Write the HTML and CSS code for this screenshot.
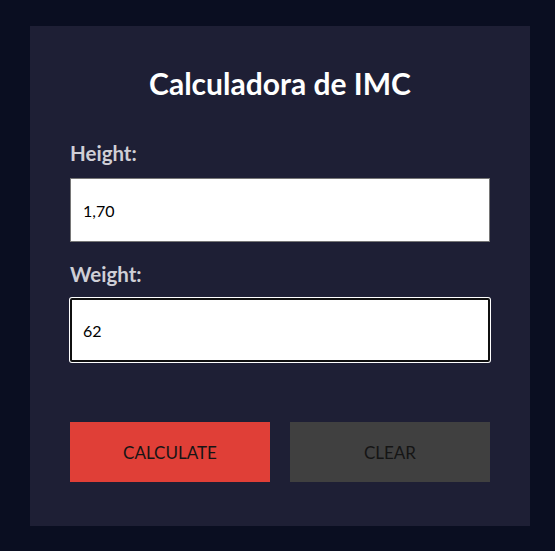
FILE: index.html
```html
<!DOCTYPE html>
<html lang="pt">
<head>
<meta charset="utf-8">
<title>Calculadora de IMC</title>
<link rel="stylesheet" href="styles.css">
</head>
<body>
<main class="card">
  <h1 class="title">Calculadora de IMC</h1>
  <form class="form">
    <label class="label" for="height">Height:</label>
    <input class="field" id="height" type="text" value="1,70">
    <label class="label label-second" for="weight">Weight:</label>
    <input class="field field-focus" id="weight" type="text" value="62">
    <div class="actions">
      <button type="button" class="btn btn-calc">CALCULATE</button>
      <button type="button" class="btn btn-clear">CLEAR</button>
    </div>
  </form>
</main>
</body>
</html>
```
FILE: styles.css
```css
* { box-sizing: border-box; }
html, body { margin: 0; padding: 0; }
body {
  background: #0a0e21;
  font-family: Lato, "Noto Sans", sans-serif;
  padding-top: 26px;
  height: 551px;
}
.card {
  width: 500px;
  height: 500px;
  margin: 0 0 0 30px;
  background: #1e1f35;
  padding: 40px 40px 0;
}
.title {
  margin: 0;
  font-size: 30px;
  font-weight: 700;
  color: #ffffff;
  text-align: center;
  line-height: 34px;
}
.form {
  display: flex;
  flex-direction: column;
  margin-top: 41px;
}
.label {
  font-size: 20.5px;
  font-weight: 700;
  color: #cfcfd6;
  line-height: 24px;
}
.label-second { margin-top: 20px; }
.field {
  margin-top: 13px;
  height: 64px;
  width: 420px;
  border: 1px solid #767676;
  background: #fff;
  padding: 0 12px;
  font-family: Lato, "Noto Sans", sans-serif;
  font-size: 16px;
  color: #000;
  outline: none;
}
.field-focus {
  margin-top: 12px;
  border: 2px solid #101010;
  border-radius: 2px;
  box-shadow: 0 0 0 1px #ffffff;
  padding: 0 11px;
}
.actions {
  display: flex;
  gap: 20px;
  margin-top: 60px;
}
.btn {
  width: 200px;
  height: 60px;
  border: none;
  font-family: Lato, "Noto Sans", sans-serif;
  font-size: 17px;
  color: #151515;
  cursor: pointer;
}
.btn-calc { background: #e03f37; }
.btn-clear { background: #404040; }
```
